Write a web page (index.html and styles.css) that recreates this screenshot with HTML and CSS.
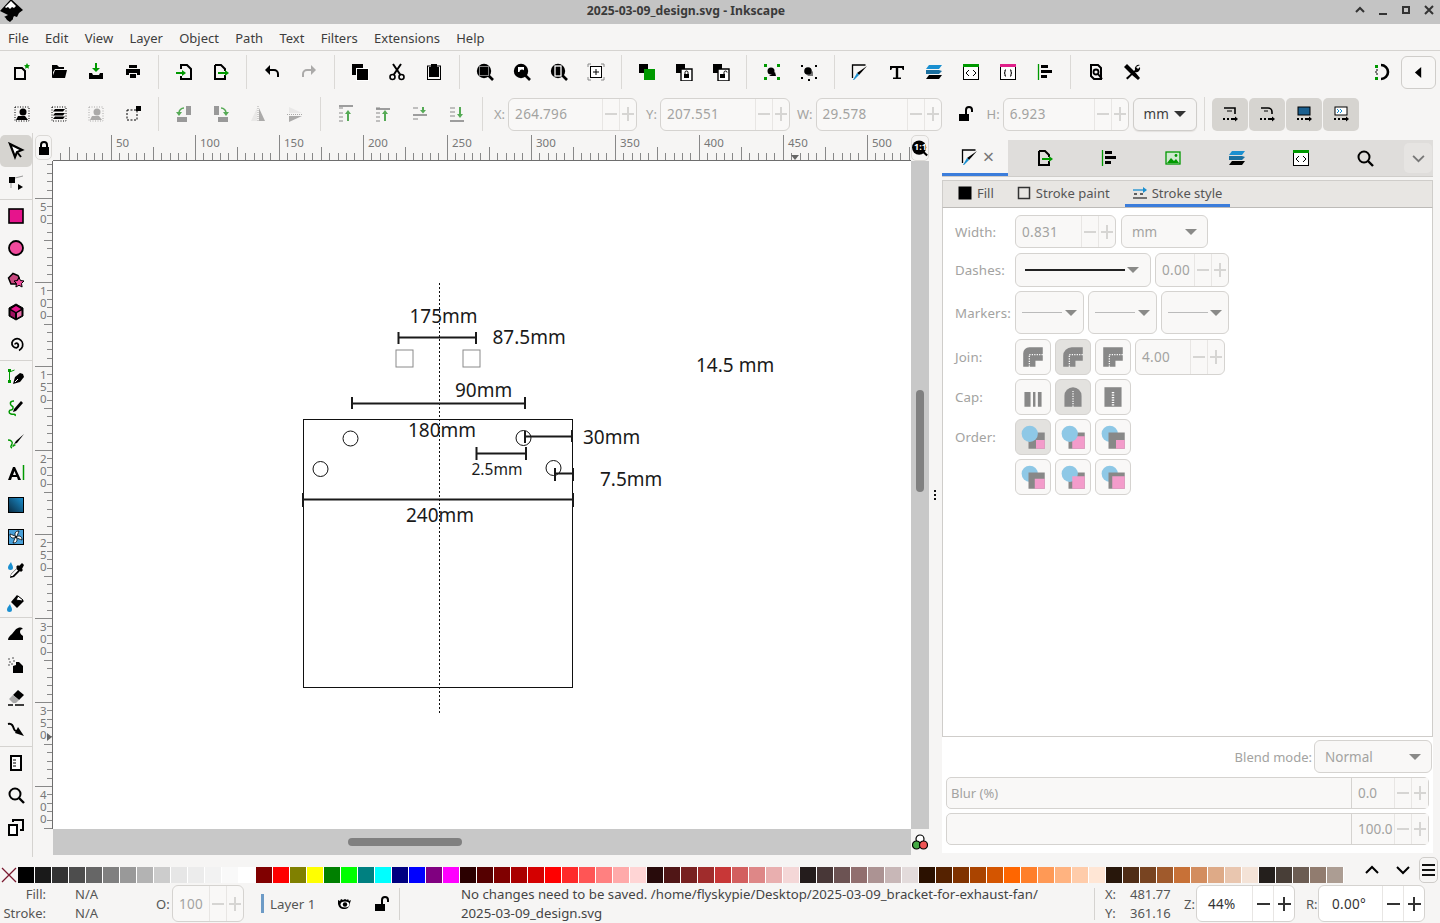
FILE: index.html
```html
<!DOCTYPE html>
<html>
<head>
    <meta charset="utf-8">
    <title>2025-03-09_design.svg - Inkscape</title>
    <link rel="stylesheet" href="styles.css">
</head>
<body>
    <svg class="defs">
        <symbol id="lens" viewBox="0 0 18 18"><circle cx="8" cy="8" r="7.2"/><path d="M12 12l5 5" stroke="#000" stroke-width="2.6"/></symbol>
        <symbol id="align" viewBox="0 0 18 18"><path d="M2.5 1v16" stroke="#090" stroke-width="1.3"/><path d="M5 2h7v3H5zM5 7h11v3H5zM5 12h6v3H5z"/></symbol>
        <symbol id="layers" viewBox="0 0 18 18"><path d="M4 2h13l-3 4H1z" fill="#1a8fd0"/><path d="M1 7h13l3 1-3 3H1z" fill="#1a6f9f"/><path d="M4 12h13l-3 4H1z"/></symbol>
        <symbol id="xml" viewBox="0 0 18 18"><rect x="1.5" y="1.5" width="15" height="15" fill="#fff" stroke="#000"/><path d="M1 1h16v3H1z" fill="#090"/><path d="M7 7l-3 3 3 3M11 7l3 3-3 3" fill="none" stroke="#000"/></symbol>
        <symbol id="exportdoc" viewBox="0 0 18 18"><path d="M3 2h6l4 4v2M13 12v4H3V2" fill="none" stroke="#000" stroke-width="2"/><path d="M6 10h8" stroke="#090" stroke-width="2"/><path d="M13 7l4 3-4 3z" fill="#090"/></symbol>
        <symbol id="brush" viewBox="0 0 18 18"><path d="M1.5 15V2h13" fill="none" stroke="#000" stroke-width="1.3"/><path d="M16 3L8 12l-2-2z"/><path d="M6 10l2 2-5 5H2z" fill="#1a8fd0"/></symbol>
        <symbol id="join" viewBox="0 0 18 18"><path d="M1 17V6a5 5 0 0 1 5-5h11v11h-6v5z" fill="#888"/><path d="M6 17V7h11" fill="none" stroke="#fff" stroke-dasharray="1 1"/></symbol>
        <symbol id="miter" viewBox="0 0 18 18"><path d="M1 17V1h16v11h-6v5z" fill="#888"/><path d="M6 17V7h11" fill="none" stroke="#fff" stroke-dasharray="1 1"/></symbol>
        <symbol id="dotbox" viewBox="0 0 18 18"><rect x="2" y="2" width="14" height="14" fill="none" stroke="#000" stroke-dasharray="1 1.5"/></symbol>
        <symbol id="arrowup" viewBox="0 0 18 18"><path d="M2 3h4M2 8h4M2 12h4M2 16h4" stroke="#888"/><path d="M11 16V8" stroke="#5a5" stroke-width="2"/><path d="M8 9l3-4 3 4z" fill="#5a5"/></symbol>
    </svg>

    <div class="titlebar">
        <svg class="logo" viewBox="0 0 24 24"><g transform="translate(0 3)"><path d="M11 -2L23 9l-4 3-2 4-3-1-2 4-3-2-5-1 4-2L0 10z"/><path d="M11 0l5 5-2 2-2-1-2 2-2-2-2 1-1-1z" fill="#fff"/><path d="M5 16h8v2l-3 3-3-2z"/></g></svg>
        <div class="title">2025-03-09_design.svg - Inkscape</div>
        <div class="winbtns">
            <svg viewBox="0 0 12 12"><path d="M2 8l4-4 4 4" fill="none" stroke="#333" stroke-width="2"/></svg>
            <svg viewBox="0 0 12 12"><path d="M2 10h8" stroke="#333" stroke-width="2"/></svg>
            <svg viewBox="0 0 12 12"><rect x="3" y="3" width="6" height="6" fill="none" stroke="#333" stroke-width="2"/></svg>
            <svg viewBox="0 0 12 12"><path d="M2 2l8 8M10 2l-8 8" stroke="#333" stroke-width="2"/></svg>
        </div>
    </div>

    <div class="menubar">
        <span>File</span><span>Edit</span><span>View</span><span>Layer</span><span>Object</span><span>Path</span><span>Text</span><span>Filters</span><span>Extensions</span><span>Help</span>
    </div>

    <!-- commands -->
    <div class="toolbar cmdbar">
        <div class="tb"><svg class="ic" viewBox="0 0 18 18"><path d="M2 5h7l3 3v8H2z" fill="none" stroke="#000" stroke-width="2"/><path d="M14 0l1 2 2 .3-1.5 1.5.4 2-1.9-1-1.9 1 .4-2L11 2.3 13 2z" fill="#090"/></svg></div>
        <div class="tb"><svg class="ic" viewBox="0 0 18 18"><path d="M2 2h5l2 2h5v2H5L3 9v5H2z"/><path d="M5 7h12l-2 8H2z"/></svg></div>
        <div class="tb"><svg class="ic" viewBox="0 0 18 18"><path d="M9 0v6" stroke="#090" stroke-width="2"/><path d="M5 5h8l-4 4z" fill="#090"/><path d="M2 10h3l1 2h6l1-2h3v6H2z"/></svg></div>
        <div class="tb"><svg class="ic" viewBox="0 0 18 18"><path d="M5 2h8v3H5zM2 6h14v6h-3v-2H5v2H2zM6 11h6v4H6z"/></svg></div>
        <div class="sep"></div>
        <div class="tb"><svg class="ic" viewBox="0 0 18 18"><path d="M6 6V2h6l4 4v10H6v-3" fill="none" stroke="#000" stroke-width="2"/><path d="M1 10h8" stroke="#090" stroke-width="2"/><path d="M7 7l4 3-4 3z" fill="#090"/></svg></div>
        <div class="tb"><svg class="ic"><use href="#exportdoc"/></svg></div>
        <div class="sep"></div>
        <div class="tb"><svg class="ic" viewBox="0 0 18 18"><path d="M3 7h8a4 4 0 0 1 4 4v3" fill="none" stroke="#000" stroke-width="2"/><path d="M7 2L2 7l5 5z"/></svg></div>
        <div class="tb"><svg class="ic off" viewBox="0 0 18 18"><path d="M15 7H7a4 4 0 0 0-4 4v3" fill="none" stroke="#000" stroke-width="2"/><path d="M11 2l5 5-5 5z"/></svg></div>
        <div class="sep"></div>
        <div class="tb"><svg class="ic" viewBox="0 0 18 18"><path d="M1 1h11v11H1z"/><path d="M5 5h13v13H5z" fill="#fff"/><path d="M6 6h11v11H6z"/></svg></div>
        <div class="tb"><svg class="ic" viewBox="0 0 18 18"><circle cx="4.5" cy="14" r="2.5" fill="none" stroke="#000" stroke-width="1.6"/><circle cx="13.5" cy="14" r="2.5" fill="none" stroke="#000" stroke-width="1.6"/><path d="M5.5 12L13 1M12.5 12L5 1" stroke="#000" stroke-width="2"/></svg></div>
        <div class="tb"><svg class="ic" viewBox="0 0 18 18"><rect x="2.5" y="3" width="13" height="13.5" fill="none" stroke="#000"/><path d="M6 1h6v3h2v10H4V4h2z"/></svg></div>
        <div class="sep"></div>
        <div class="tb"><svg class="ic" viewBox="0 0 18 18"><use href="#lens"/><rect x="3.5" y="3.5" width="9" height="9" fill="none" stroke="#fff" stroke-dasharray="1 1"/></svg></div>
        <div class="tb"><svg class="ic" viewBox="0 0 18 18"><use href="#lens"/><path d="M5 4h6v5H5z" fill="#fff"/><circle cx="9" cy="9" r="2.5" fill="#000"/></svg></div>
        <div class="tb"><svg class="ic" viewBox="0 0 18 18"><use href="#lens"/><rect x="5" y="3" width="6" height="10" fill="none" stroke="#fff" stroke-width="1.3"/></svg></div>
        <div class="tb"><svg class="ic" viewBox="0 0 18 18"><path d="M1 4V1h3M14 1h3v3M17 14v3h-3M4 17H1v-3" fill="none" stroke="#888"/><rect x="3.5" y="3.5" width="11" height="11" fill="#fff" stroke="#000"/><path d="M9 6v6M6 9h6" stroke="#000"/></svg></div>
        <div class="sep"></div>
        <div class="tb"><svg class="ic" viewBox="0 0 18 18"><path d="M1 1h9v9H1z"/><path d="M6 6h11v11H6z" fill="#090"/></svg></div>
        <div class="tb"><svg class="ic" viewBox="0 0 18 18"><path d="M1 1h9v9H1z"/><path d="M6 6h11v12H6z" fill="#fff"/><path d="M6 6h11v12H6z" fill="none" stroke="#000" stroke-width="1.4"/><path d="M9 11h5v4H9z"/><path d="M10 11V9.500a1.500 1.500 0 0 1 3 0V11" fill="none" stroke="#000"/></svg></div>
        <div class="tb"><svg class="ic" viewBox="0 0 18 18"><path d="M1 1h9v9H1z"/><path d="M6 6h11v12H6z" fill="#fff"/><path d="M6 6h11v12H6z" fill="none" stroke="#000" stroke-width="1.4"/><path d="M8 11h5v4H8z"/><path d="M12 11V9.500a1.500 1.500 0 0 1 3 0" fill="none" stroke="#000"/></svg></div>
        <div class="sep"></div>
        <div class="tb"><svg class="ic" viewBox="0 0 18 18"><path d="M1 1h3v3H1zM14 1h3v3h-3zM1 14h3v3H1zM14 14h3v3h-3z" fill="#090"/><circle cx="8" cy="8" r="3.500"/><path d="M13 13H6l6-4z"/></svg></div>
        <div class="tb"><svg class="ic" viewBox="0 0 18 18"><path d="M1 2h2v2H1zM15 2h2v2h-2zM1 14h2v2H1zM15 14h2v2h-2zM8 16h2v2H8z"/><path d="M13 13H7l6-5z" fill="#777"/><circle cx="8" cy="8" r="3.800"/></svg></div>
        <div class="sep"></div>
        <div class="tb"><svg class="ic"><use href="#brush"/></svg></div>
        <div class="tb"><svg class="ic" viewBox="0 0 18 18"><path d="M2 3h14v4h-1.200l-1-2H10.200v9.500H13V16H5v-1.500h2.800V5H4.200l-1 2H2z"/></svg></div>
        <div class="tb"><svg class="ic"><use href="#layers"/></svg></div>
        <div class="tb"><svg class="ic"><use href="#xml"/></svg></div>
        <div class="tb"><svg class="ic" viewBox="0 0 18 18"><rect x="1.500" y="1.500" width="15" height="15" fill="#fff" stroke="#000"/><path d="M1 1h16v3H1z" fill="#e0218a"/><path d="M7 7H6v2.500L5 10l1 .5V13h1M11 7h1v2.500l1 .5-1 .5V13h-1" fill="none" stroke="#000"/></svg></div>
        <div class="tb"><svg class="ic"><use href="#align"/></svg></div>
        <div class="sep"></div>
        <div class="tb"><svg class="ic" viewBox="0 0 18 18"><path d="M4 2h7l3 3v11H7l-3-3z" fill="none" stroke="#000" stroke-width="2"/><circle cx="9" cy="9" r="2.500" fill="none" stroke="#000" stroke-width="1.800"/><path d="M11 11l4 5" stroke="#000" stroke-width="2"/></svg></div>
        <div class="tb"><svg class="ic" viewBox="0 0 18 18"><path d="M3 1l5 5 3 3 5 6-2 2-6-5-3-3-5-5z"/><path d="M16 2a4 4 0 0 0-5 5L2 15l1.500 1.500L11 9a4 4 0 0 0 5-5l-2 2-2-2z"/></svg></div>
        <div class="cmdend">
            <svg class="ic" viewBox="0 0 18 18"><path d="M8 2a7 7 0 0 1 0 14" fill="none" stroke="#000" stroke-width="2.600"/><path d="M2 2h3v3H2zM2 14h3v3H2z" fill="#090"/><path d="M3 7h2M3 11h2M3 8v2" stroke="#000"/></svg>
            <div class="backbtn"><svg viewBox="0 0 10 14"><path d="M8 1v12L1 7z"/></svg></div>
        </div>
    </div>

    <!-- selector tool controls -->
    <div class="toolbar ctlbar">
        <div class="tb"><svg class="ic" viewBox="0 0 18 18"><use href="#dotbox"/><circle cx="10" cy="7" r="3.500"/><path d="M3 15l2-4h7l3 4z"/></svg></div>
        <div class="tb"><svg class="ic" viewBox="0 0 18 18"><use href="#dotbox"/><path d="M5 4h10l-2 2.500H3zM5 8h10l-2 2.500H3zM5 11.500h10l-2 2.500H3z"/></svg></div>
        <div class="tb"><svg class="ic off" viewBox="0 0 18 18"><use href="#dotbox"/><circle cx="10" cy="7" r="3.500"/><path d="M3 15l2-4h7l3 4z"/></svg></div>
        <div class="tb"><svg class="ic" viewBox="0 0 18 18"><path d="M3 5h10v10H3z" fill="none" stroke="#000" stroke-dasharray="2 1.500"/><path d="M12 1h5v5h-5z"/></svg></div>
        <div class="sep"></div>
        <div class="tb"><svg class="ic" viewBox="0 0 18 18"><path d="M11 1h5v9h-5zM2 12h10v5H2z" fill="#999"/><path d="M9 3a5 5 0 0 0-5 5" fill="none" stroke="#5a5" stroke-width="1.600"/><path d="M1 7h6l-3 4z" fill="#5a5"/></svg></div>
        <div class="tb"><svg class="ic" viewBox="0 0 18 18"><path d="M2 1h5v9H2zM6 12h10v5H6z" fill="#999"/><path d="M9 3a5 5 0 0 1 5 5" fill="none" stroke="#5a5" stroke-width="1.600"/><path d="M11 7h6l-3 4z" fill="#5a5"/></svg></div>
        <div class="tb"><svg class="ic off" viewBox="0 0 18 18"><path d="M8 3v13H2z" fill="#ccc"/><path d="M10 3v13h6z"/><path d="M9 1v16" stroke="#000" stroke-dasharray="1 1"/></svg></div>
        <div class="tb"><svg class="ic off" viewBox="0 0 18 18"><path d="M3 2l13 6H3z" fill="#ccc"/><path d="M3 11l13 0-13 6z"/><path d="M1 9.500h16" stroke="#000" stroke-dasharray="1 1"/></svg></div>
        <div class="sep"></div>
        <div class="tb"><svg class="ic" viewBox="0 0 18 18"><path d="M2 1h14" stroke="#888" stroke-width="1.600"/><use href="#arrowup"/></svg></div>
        <div class="tb"><svg class="ic" viewBox="0 0 18 18"><path d="M2 4h14" stroke="#888" stroke-width="1.600"/><use href="#arrowup"/></svg></div>
        <div class="tb"><svg class="ic" viewBox="0 0 18 18"><path d="M2 3h5M2 14h5" stroke="#888"/><path d="M2 10h14" stroke="#888" stroke-width="1.600"/><path d="M12 2v4" stroke="#5a5" stroke-width="2"/><path d="M9 5h6l-3 3.500z" fill="#5a5"/></svg></div>
        <div class="tb"><svg class="ic" viewBox="0 0 18 18"><path d="M2 3h5M2 7h5M2 11h5" stroke="#888"/><path d="M2 16h14" stroke="#888" stroke-width="1.600"/><path d="M12 2v8" stroke="#5a5" stroke-width="2"/><path d="M9 9h6l-3 4z" fill="#5a5"/></svg></div>
        <div class="sep"></div>
        <label class="lbl lbl-x">X:</label>
        <div class="spin w129"><span class="spin-val">264.796</span><i class="minus"></i><i class="plus"></i></div>
        <label class="lbl lbl-y">Y:</label>
        <div class="spin w130"><span class="spin-val">207.551</span><i class="minus"></i><i class="plus"></i></div>
        <label class="lbl lbl-w">W:</label>
        <div class="spin w126"><span class="spin-val">29.578</span><i class="minus"></i><i class="plus"></i></div>
        <svg class="ctl-lock" viewBox="0 0 16 16"><path d="M1 8h10v7H1z"/><path d="M8 8V4a3 3 0 0 1 6 0v2" fill="none" stroke="#000" stroke-width="2"/></svg>
        <label class="lbl lbl-h">H:</label>
        <div class="spin w126"><span class="spin-val">6.923</span><i class="minus"></i><i class="plus"></i></div>
        <div class="unit"><span>mm</span><b class="caret dark"></b></div>
        <div class="sep sep-unit"></div>
        <div class="toggle"><svg class="ic" viewBox="0 0 18 18"><path d="M3 3h11v6" fill="none" stroke="#000" stroke-width="1.600"/><path d="M6 6h5" stroke="#000"/><path d="M2 14h2M6 14h2M10 14h4" stroke="#000" stroke-width="2"/><path d="M14 11.500l3 2.500-3 2.500z"/></svg></div>
        <div class="toggle"><svg class="ic" viewBox="0 0 18 18"><path d="M3 3h7a4 4 0 0 1 4 4v2" fill="none" stroke="#000" stroke-width="1.600"/><path d="M6 6h4" stroke="#000"/><path d="M2 14h2M6 14h2M10 14h4" stroke="#000" stroke-width="2"/><path d="M14 11.500l3 2.500-3 2.500z"/></svg></div>
        <div class="toggle"><svg class="ic" viewBox="0 0 18 18"><rect x="3" y="2" width="12" height="8" fill="#1a5f8f" stroke="#000"/><path d="M2 14h2M6 14h2M10 14h4" stroke="#000" stroke-width="2"/><path d="M14 11.500l3 2.500-3 2.500z"/></svg></div>
        <div class="toggle"><svg class="ic" viewBox="0 0 18 18"><rect x="3" y="2" width="12" height="8" fill="#fff" stroke="#000"/><path d="M5 4l2 2-2 2M8 4l2 2-2 2" fill="none" stroke="#1a8fd0"/><path d="M2 14h2M6 14h2M10 14h4" stroke="#000" stroke-width="2"/><path d="M14 11.500l3 2.500-3 2.500z"/></svg></div>
    </div>

    <div class="main">
        <!-- tools -->
        <div class="toolbox">
            <div class="tool active"><svg class="ic" viewBox="0 0 18 18"><path d="M3 2l12 6-5 2-2 5z" fill="#fff" stroke="#000" stroke-width="2.200"/><path d="M10 10l4 5" stroke="#000" stroke-width="2"/></svg></div>
            <div class="tool"><svg class="ic" viewBox="0 0 18 18"><path d="M2 3h6v6H2z"/><path d="M4 14V9M8 4l8-2" stroke="#999"/><path d="M11 10l5 3-5 3z"/></svg></div>
            <div class="hr"></div>
            <div class="tool"><svg class="ic" viewBox="0 0 18 18"><rect x="2" y="2" width="14" height="14" fill="#e6148c" stroke="#000" stroke-width="1.600"/></svg></div>
            <div class="tool"><svg class="ic" viewBox="0 0 18 18"><circle cx="9" cy="9" r="7" fill="#f04a9c" stroke="#000" stroke-width="1.800"/></svg></div>
            <div class="tool"><svg class="ic" viewBox="0 0 18 18"><path d="M1.500 7l4.500-4.500 5 2 1 2L9 13H4z" fill="#c8487f" stroke="#000" stroke-width="1.500"/><path d="M12 6.500l1.500 3 3.500.5-2.500 2.500.6 3.500-3.100-1.700-3.100 1.700.6-3.500L7 10l3.500-.5z" fill="#f04a9c" stroke="#000"/></svg></div>
            <div class="tool"><svg class="ic" viewBox="0 0 18 18"><path d="M9 1l7 4v8l-7 4-7-4V5z" stroke="#000" fill="#000"/><path d="M9 3l5 3-5 3-5-3z" fill="#e6148c"/><path d="M3.500 7.500L8 10v5l-4.500-2.500z" fill="#a01060"/><path d="M14.500 7.500L10 10v5l4.500-2.500z" fill="#e86aa8"/></svg></div>
            <div class="tool"><svg class="ic" viewBox="0 0 18 18"><path d="M8 9.500a1.500 1.500 0 0 1 2.500-1 2.500 2.500 0 0 1-1 4.300A4.500 4.500 0 0 1 5 7.500a5.500 5.500 0 0 1 7-3.500 6.500 6.500 0 0 1 3.500 7.500A7 7 0 0 1 12 15.500" fill="none" stroke="#000" stroke-width="1.800"/></svg></div>
            <div class="hr"></div>
            <div class="tool"><svg class="ic" viewBox="0 0 18 18"><path d="M1 1h3v3H1zM1 12h3v3H1z" fill="#090"/><path d="M2.500 12V4l5-2" fill="none" stroke="#090"/><path d="M16 6l-3-1-5 4-2 7 7-2 4-5z"/><path d="M8 14l3-3" stroke="#fff"/></svg></div>
            <div class="tool"><svg class="ic" viewBox="0 0 18 18"><path d="M16 3l-2-2-7 8-1 3 3-1z"/><path d="M7 1C2 1 3 5 5 6s1 4-1 4-3 3 0 4 5-1 4 2" fill="none" stroke="#090" stroke-width="1.500"/></svg></div>
            <div class="tool"><svg class="ic" viewBox="0 0 18 18"><path d="M17 2l-8 7-2 3 3-1z"/><path d="M1 8c3 0 5 2 4 4s-2 3 0 4" fill="none" stroke="#090" stroke-width="1.400"/><path d="M7 12l-2 2 1 1 3-2z" fill="#090"/></svg></div>
            <div class="tool"><svg class="ic" viewBox="0 0 18 18"><path d="M6 3h2l6 13h-3l-1-3H5l-1 3H1zM6 11h3L7.500 7z" fill-rule="evenodd"/><path d="M16.500 1v15" stroke="#090" stroke-width="1.500"/></svg></div>
            <div class="tool"><svg class="ic" viewBox="0 0 18 18"><defs><linearGradient id="grad" x1="0" y1="1" x2="1" y2="0"><stop offset="0" stop-color="#0a2a40"/><stop offset="1" stop-color="#1a90d0"/></linearGradient></defs><rect x="1.500" y="1.500" width="15" height="15" fill="url(#grad)" stroke="#000"/></svg></div>
            <div class="tool"><svg class="ic" viewBox="0 0 18 18"><rect x="1.500" y="1.500" width="15" height="15" fill="#4aa0d8" stroke="#000"/><path d="M9 9C7 6 8 3 12 3c-1 2-1 4-3 6zM9 9c3-2 6-1 6 3-2-1-4-1-6-3zM9 9c2 3 1 6-3 6 1-2 1-4 3-6zM9 9c-3 2-6 1-6-3 2 1 4 1 6 3z" fill="#fff" stroke="#000" stroke-width=".8"/></svg></div>
            <div class="tool shift"><svg class="ic" viewBox="0 0 18 18"><path d="M17 3l-2-2-3 3-1-1-2 2 1 1-6 6-1 4 4-1 6-6 1 1 2-2-1-1z"/><path d="M9.500 7L4 12.500v1.500h1.500L11 8.500z" fill="#fff"/><path d="M4 0C2 3 1 4 1 5.500a2.500 2.500 0 0 0 5 0C6 4 5 3 4 0z" fill="#1a8fd0"/></svg></div>
            <div class="tool shift"><svg class="ic" viewBox="0 0 18 18"><path d="M10 1l7 6-7 7-6-6z"/><path d="M11 2l5 4-1 1-6-1z" fill="#fff" stroke="#000"/><path d="M3 10c-2 3-3 4-3 5.500a2.500 2.500 0 0 0 5 0C5 14 4 13 3 10z" fill="#1a8fd0"/></svg></div>
            <div class="hr"></div>
            <div class="tool"><svg class="ic" viewBox="0 0 18 18"><path d="M1 15c0-3 2-4 4-6s3-5 6-6c3-1 4 0 5 1-2 0-3 1-3 3 0 2 2 3 3 4v4z"/></svg></div>
            <div class="tool"><svg class="ic" viewBox="0 0 18 18"><path d="M6 16V9l3-1V5h3l4 4v7z"/><path d="M1 2h2M5 1h2M2 5h2M6 4h2M1 8h2M4 7h2" stroke="#888" stroke-width="1.400"/></svg></div>
            <div class="tool"><svg class="ic" viewBox="0 0 18 18"><path d="M11 1l6 5-5 5-6-5z"/><path d="M6 6l6 5-3 3H6L2 10z" fill="#aaa"/><path d="M1 16h5M8 16h9" stroke="#000" stroke-width="1.500"/></svg></div>
            <div class="tool"><svg class="ic" viewBox="0 0 18 18"><path d="M1 3c4-1 5 2 6 5s3 2 5 1" fill="none" stroke="#000" stroke-width="2"/><path d="M11 6l6 9-9-3z"/></svg></div>
            <div class="hr"></div>
            <div class="tool"><svg class="ic" viewBox="0 0 18 18"><path d="M4 2h10v14H4z" fill="#fff" stroke="#000" stroke-width="2"/><path d="M6 6h3M6 9h3M6 12h3" stroke="#000" stroke-width="1.200"/></svg></div>
            <div class="tool"><svg class="ic" viewBox="0 0 18 18"><circle cx="8" cy="8" r="5.500" fill="none" stroke="#000" stroke-width="2"/><path d="M12 12l5 5" stroke="#000" stroke-width="2.400"/></svg></div>
            <div class="tool"><svg class="ic" viewBox="0 0 18 18"><path d="M2 7h8v10H2z" fill="#fff" stroke="#000" stroke-width="2"/><path d="M6 4V2h10v10h-3" fill="none" stroke="#000" stroke-width="2"/></svg></div>
        </div>

        <!-- canvas with rulers and scrollbars -->
        <div class="workspace">
            <div class="corner"><svg viewBox="0 0 12 16"><path d="M1 7h10v8H1z"/><path d="M3 7V5a3 3 0 0 1 6 0v2" fill="none" stroke="#000" stroke-width="2"/></svg></div>
            <div class="ruler-top">
                <span>50</span><span>100</span><span>150</span><span>200</span><span>250</span><span>300</span><span>350</span><span>400</span><span>450</span><span>500</span>
                <b class="mark-top"></b>
            </div>
            <div class="zoom11"><svg viewBox="0 0 18 18"><circle cx="8" cy="8" r="8"/><path d="M12 12l5 5" stroke="#000" stroke-width="2.400"/></svg><span>1:1</span></div>
            <div class="ruler-left">
                <span>50</span><span>100</span><span>150</span><span>200</span><span>250</span><span>300</span><span>350</span><span>400</span>
                <b class="mark-left"></b>
            </div>
            <div class="canvas">
                <svg class="drawing" viewBox="53 161 858 668">
                    <rect class="thin" x="303.500" y="419.500" width="269" height="268"/>
                    <path class="guide" d="M439.500 283V713"/>
                    <rect class="square" x="396" y="350" width="17" height="17"/>
                    <rect class="square" x="463" y="350" width="17" height="17"/>
                    <circle class="thin" cx="350.500" cy="438.500" r="7.500"/>
                    <circle class="thin" cx="320.500" cy="469" r="7.500"/>
                    <circle class="thin" cx="523.500" cy="438" r="7.500"/>
                    <circle class="thin" cx="553.500" cy="468" r="7.500"/>
                    <path class="dim" d="M398.500 332V344M398.500 337.500H476M476 332V344"/>
                    <path class="dim" d="M352 397V409M352 403.500H525M525 397V409"/>
                    <path class="dim" d="M525 431V443M525 436.500H572M572 430V442"/>
                    <path class="dim" d="M476.500 447V460M476.500 453.500H526M526 447V460"/>
                    <path class="dim" d="M555 468V481M555 473.500H573M573 468V481"/>
                    <path class="dim" d="M303 493V507M303 499.500H573M573 493V507"/>
                    <text x="409.500" y="323">175mm</text>
                    <text x="492.500" y="344">87.5mm</text>
                    <text x="455" y="397">90mm</text>
                    <text x="408" y="437">180mm</text>
                    <text x="583" y="444">30mm</text>
                    <text class="small" x="471.500" y="475">2.5mm</text>
                    <text x="600" y="486">7.5mm</text>
                    <text x="406" y="522">240mm</text>
                    <text x="696" y="372">14.5 mm</text>
                </svg>
            </div>
            <div class="vscroll"><b></b></div>
            <div class="hscroll"><b></b></div>
            <div class="cms"><svg viewBox="0 0 16 16"><circle cx="8" cy="5" r="4" fill="#fff" stroke="#000" stroke-width="1.200"/><circle cx="4.500" cy="11" r="4" fill="#4a4" stroke="#000" stroke-width="1.200"/><circle cx="11.500" cy="11" r="4" fill="#e55" stroke="#000" stroke-width="1.200"/></svg></div>
        </div>

        <div class="handle"><i></i><i></i><i></i></div>

        <!-- fill and stroke dialog -->
        <div class="panel">
            <div class="tabs">
                <div class="tab first"><svg class="ic" viewBox="0 0 18 18"><use href="#brush"/></svg><em>×</em></div>
                <div class="tab"><svg class="ic"><use href="#exportdoc"/></svg></div>
                <div class="tab"><svg class="ic"><use href="#align"/></svg></div>
                <div class="tab"><svg class="ic" viewBox="0 0 18 18"><rect x="2" y="3" width="14" height="12" fill="#cfe8cf" stroke="#090" stroke-width="1.300"/><path d="M3 14l4-5 3 3 2-2 3 4z" fill="#090"/><circle cx="12" cy="6.500" r="1.400" fill="#090"/></svg></div>
                <div class="tab"><svg class="ic"><use href="#layers"/></svg></div>
                <div class="tab"><svg class="ic"><use href="#xml"/></svg></div>
                <div class="tab"><svg class="ic" viewBox="0 0 18 18"><circle cx="8" cy="8" r="5.500" fill="none" stroke="#000" stroke-width="2"/><path d="M12 12l5 5" stroke="#000" stroke-width="2.400"/></svg></div>
                <div class="tabmore"><svg viewBox="0 0 14 10"><path d="M1 2l6 6 6-6" fill="none" stroke="#777" stroke-width="2"/></svg></div>
            </div>
            <div class="subtabs">
                <div class="subtab s-fill"><svg viewBox="0 0 14 14"><rect width="13" height="13" x="0.500" y="0.500"/></svg>Fill</div>
                <div class="subtab"><svg viewBox="0 0 14 14"><rect width="11" height="11" x="1.500" y="1.500" fill="none" stroke="#333" stroke-width="1.500"/></svg>Stroke paint</div>
                <div class="subtab current"><svg viewBox="0 0 14 14"><path d="M0 4h11" stroke="#1a8fd0" stroke-width="1.300"/><path d="M10 1l4 3-4 3z" fill="#1a8fd0"/><path d="M1 8h3M7 8h3" stroke="#333" stroke-width="1.300"/><path d="M0 12h14" stroke="#333" stroke-width="1.300"/></svg>Stroke style</div>
            </div>
            <div class="body">
                <div class="row r-width">
                    <label>Width:</label>
                    <div class="spin w101"><span class="spin-val">0.831</span><i class="minus"></i><i class="plus"></i></div>
                    <div class="select w87"><span>mm</span><b class="caret"></b></div>
                </div>
                <div class="row r-dash">
                    <label>Dashes:</label>
                    <div class="select w136"><u class="dash"></u><b class="caret"></b></div>
                    <div class="spin w74"><span class="spin-val">0.00</span><i class="minus"></i><i class="plus"></i></div>
                </div>
                <div class="row r-mark">
                    <label>Markers:</label>
                    <div class="select w69"><u class="mark"></u><b class="caret"></b></div>
                    <div class="select w69"><u class="mark"></u><b class="caret"></b></div>
                    <div class="select w68"><u class="mark"></u><b class="caret"></b></div>
                </div>
                <div class="row r-btn">
                    <label>Join:</label>
                    <div class="opt"><svg viewBox="0 0 18 18"><use href="#join"/></svg></div>
                    <div class="opt on"><svg viewBox="0 0 18 18"><path d="M1 17V8a7 7 0 0 1 7-7h9v11h-6v5z" fill="#888"/><path d="M6 17V7h11" fill="none" stroke="#fff" stroke-dasharray="1 1"/></svg></div>
                    <div class="opt"><svg viewBox="0 0 18 18"><use href="#miter"/></svg></div>
                    <div class="spin w90"><span class="spin-val">4.00</span><i class="minus"></i><i class="plus"></i></div>
                </div>
                <div class="row r-btn">
                    <label>Cap:</label>
                    <div class="opt"><svg viewBox="0 0 18 18"><path d="M2 5h5v12H2zM9 5h2v12H9zM13 5h3v12h-3z" fill="#888"/></svg></div>
                    <div class="opt on"><svg viewBox="0 0 18 18"><path d="M2 17V8a7 7 0 0 1 14 0v9z" fill="#888"/><path d="M9 4v13" stroke="#fff" stroke-dasharray="1 1"/></svg></div>
                    <div class="opt"><svg viewBox="0 0 18 18"><path d="M2 1h14v16H2z" fill="#888"/><path d="M9 5v12" stroke="#fff" stroke-width="2" stroke-dasharray="1 1"/></svg></div>
                </div>
                <div class="row r-btn r-order">
                    <label>Order:</label>
                    <div class="opt on"><svg viewBox="0 0 20 20"><path d="M6 6h13v13H6z" fill="#888"/><path d="M12 12h7v7h-7z" fill="#f39ccb"/><circle cx="7" cy="7" r="6.500" fill="#8ec8e6"/></svg></div>
                    <div class="opt"><svg viewBox="0 0 20 20"><path d="M6 6h13v13H6z" fill="#888"/><path d="M9 9h10v10H9z" fill="#f39ccb"/><circle cx="7" cy="7" r="6.500" fill="#8ec8e6"/></svg></div>
                    <div class="opt"><svg viewBox="0 0 20 20"><circle cx="7" cy="7" r="6.500" fill="#8ec8e6"/><path d="M6 6h13v13H6z" fill="#888"/><path d="M12 12h7v7h-7z" fill="#f39ccb"/></svg></div>
                </div>
                <div class="row r-btn r-order">
                    <label></label>
                    <div class="opt"><svg viewBox="0 0 20 20"><circle cx="7" cy="7" r="6.500" fill="#8ec8e6"/><path d="M6 6h13v13H6z" fill="#888"/><path d="M11 11h8v8h-8z" fill="#f39ccb"/></svg></div>
                    <div class="opt"><svg viewBox="0 0 20 20"><path d="M6 6h13v13H6z" fill="#888"/><circle cx="7" cy="7" r="6.500" fill="#8ec8e6"/><path d="M9 9h10v10H9z" fill="#f39ccb"/></svg></div>
                    <div class="opt"><svg viewBox="0 0 20 20"><circle cx="7" cy="7" r="6.500" fill="#8ec8e6"/><path d="M6 6h13v13H6z" fill="#888"/><path d="M9 9h10v10H9z" fill="#f39ccb"/></svg></div>
                </div>
            </div>
            <div class="extras">
                <div class="blend">
                    <label>Blend mode:</label>
                    <div class="select w118"><span>Normal</span><b class="caret"></b></div>
                </div>
                <div class="slider">
                    <span class="slider-name">Blur (%)</span>
                    <div class="spin slider-spin"><span class="spin-val">0.0</span><i class="minus"></i><i class="plus"></i></div>
                </div>
                <div class="slider">
                    <span class="slider-name"></span>
                    <div class="spin slider-spin"><span class="spin-val">100.0</span><i class="minus"></i><i class="plus"></i></div>
                </div>
            </div>
        </div>
    </div>

    <div class="palettebar">
        <svg class="none" viewBox="0 0 16 16"><path d="M1 1l14 14M15 1L1 15" stroke="#7a1a30" stroke-width="1.300"/></svg>
        <div class="swatches" id="swatches"></div>
        <div class="palette-end">
            <svg viewBox="0 0 14 10"><path d="M1 8l6-6 6 6" fill="none" stroke="#000" stroke-width="2"/></svg>
            <svg viewBox="0 0 14 10"><path d="M1 2l6 6 6-6" fill="none" stroke="#000" stroke-width="2"/></svg>
            <div class="burger"><i></i><i></i><i></i></div>
        </div>
    </div>

    <div class="statusbar">
        <div class="style-info">
            <div><span>Fill:</span><span>N/A</span></div>
            <div><span>Stroke:</span><span>N/A</span></div>
        </div>
        <label class="st-o">O:</label>
        <div class="spin st-opacity"><span class="spin-val">100</span><i class="minus"></i><i class="plus"></i></div>
        <div class="layerbar"></div>
        <span class="layername">Layer 1</span>
        <svg class="st-ic eye" viewBox="0 0 16 16"><path d="M1 4l2 1 1-2 2 1 2-1 2 1 1-1 1 2 2-1-1 3v1c-1 4-3 5-6 5s-5-1-6-5z"/><ellipse cx="8" cy="8.500" rx="4.500" ry="3" fill="#fff"/><circle cx="8" cy="8.500" r="2.200"/></svg>
        <svg class="st-ic padlock" viewBox="0 0 16 16"><path d="M1 8h10v7H1z"/><path d="M8 8V4a3 3 0 0 1 6 0v2" fill="none" stroke="#000" stroke-width="2"/></svg>
        <div class="vline"></div>
        <div class="message">No changes need to be saved. /home/flyskypie/Desktop/2025-03-09_bracket-for-exhaust-fan/<br>2025-03-09_design.svg</div>
        <div class="vline"></div>
        <div class="coords">
            <div><span>X:</span><span>481.77</span></div>
            <div><span>Y:</span><span>361.16</span></div>
        </div>
        <label class="st-z">Z:</label>
        <div class="spin live st-zoom"><span class="spin-val">44%</span><i class="minus"></i><i class="plus"></i></div>
        <label class="st-r">R:</label>
        <div class="spin live st-rot"><span class="spin-val">0.00°</span><i class="minus"></i><i class="plus"></i></div>
    </div>

    <script src="script.js"></script>
</body>
</html>
```

FILE: styles.css
```css
* {
    box-sizing: border-box;
}
html, body {
    margin: 0;
    height: 923px;
    overflow: hidden;
}
body {
    display: flex;
    flex-direction: column;
    width: 1440px;
    background-color: #f6f5f4;
    color: #3d3d3d;
    font-family: "Noto Sans", sans-serif;
    font-size: 13px;
}
i, b, em, u {
    font-style: normal;
    text-decoration: none;
}
.defs {
    position: absolute;
    width: 0;
    height: 0;
}
.ic {
    width: 18px;
    height: 18px;
    flex: none;
}
.off {
    opacity: 0.3;
}

/* title and menu */
.titlebar {
    display: flex;
    align-items: center;
    height: 24px;
    flex: none;
    padding-bottom: 4px;
    background-color: #c4c4c4;
    overflow: hidden;
}
.logo {
    width: 24px;
    height: 24px;
    flex: none;
}
.title {
    flex: 1;
    padding-right: 6px;
    text-align: center;
    font-weight: 700;
    font-size: 12.2px;
    color: #3a3a3a;
}
.winbtns {
    display: flex;
    gap: 11px;
    padding-right: 5px;
}
.winbtns svg {
    width: 12px;
    height: 12px;
}
.menubar {
    display: flex;
    align-items: center;
    gap: 16.3px;
    height: 27px;
    flex: none;
    padding: 1px 0 0 8px;
    border-bottom: 1px solid #d5d3d0;
    font-size: 13px;
}

/* toolbars */
.toolbar {
    display: flex;
    align-items: center;
    flex: none;
    padding-left: 3px;
}
.cmdbar {
    height: 44px;
    padding-bottom: 2px;
}
.ctlbar {
    height: 38px;
}
.tb {
    display: flex;
    justify-content: center;
    width: 37px;
    flex: none;
}
.sep {
    width: 1px;
    height: 34px;
    margin: 0 6.5px;
    flex: none;
    background-color: #dbd9d6;
}
.cmdend {
    display: flex;
    align-items: center;
    margin-left: auto;
    padding-right: 4px;
    gap: 10px;
}
.backbtn {
    display: flex;
    align-items: center;
    justify-content: center;
    width: 35px;
    height: 33px;
    border: 1px solid #cfcdca;
    border-radius: 6px;
    background-color: #f8f7f6;
}
.backbtn svg {
    width: 9px;
    height: 13px;
}
.lbl {
    color: #a3a3a1;
}
.lbl-x {
    margin: 0 3px 0 5px;
}
.lbl-y {
    margin: 0 3px 0 9px;
}
.lbl-w {
    margin: 0 3px 0 7px;
}
.lbl-h {
    margin: 0 3px 0 0;
}
.ctl-lock {
    width: 16px;
    height: 16px;
    margin: 0 13px 0 16px;
    flex: none;
}

/* spin buttons */
.spin {
    display: flex;
    height: 33px;
    flex: none;
    border: 1px solid #d5d3d0;
    border-radius: 6px;
    background-color: #f9f8f7;
    color: #a3a3a1;
    font-size: 13.5px;
    overflow: hidden;
}
.spin-val {
    flex: 1;
    align-self: center;
    padding-left: 6px;
    letter-spacing: 0.3px;
    white-space: nowrap;
}
.spin i {
    position: relative;
    width: 17px;
    flex: none;
    border-left: 1px solid #e8e6e4;
}
.spin i::before {
    content: "";
    position: absolute;
    left: 2px;
    right: 2px;
    top: calc(50% - 1px);
    height: 2px;
    background-color: #d6d5d3;
}
.spin .plus::after {
    content: "";
    position: absolute;
    top: calc(50% - 7px);
    left: 7px;
    width: 2px;
    height: 14px;
    background-color: #d6d5d3;
}
.w129 { width: 129px; }
.w130 { width: 130px; }
.w126 { width: 126px; }
.w101 { width: 101px; }
.w74 { width: 74px; }
.w90 { width: 90px; }
.w87 { width: 87px; }
.w136 { width: 136px; }
.w69 { width: 69px; }
.w68 { width: 68px; }
.w118 { width: 118px; }

.unit {
    display: flex;
    align-items: center;
    justify-content: center;
    gap: 5px;
    width: 64px;
    height: 33px;
    margin-left: 4px;
    border: 1px solid #cfcdca;
    border-radius: 6px;
    background-color: #f6f5f4;
    box-shadow: 0 1px 1px #e4e2df;
    font-size: 13.5px;
}
.caret {
    width: 0;
    height: 0;
    flex: none;
    border-left: 6px solid transparent;
    border-right: 6px solid transparent;
    border-top: 6px solid #8a8a88;
}
.caret.dark {
    border-top-color: #333;
}
.sep-unit {
    margin: 0 7px;
}
.toggle {
    display: flex;
    align-items: center;
    justify-content: center;
    width: 36px;
    height: 33px;
    margin-right: 1px;
    flex: none;
    border-radius: 5px;
    background-color: #d6d4d0;
}

/* main area */
.main {
    display: flex;
    height: 724px;
    flex: none;
}
.toolbox {
    width: 33px;
    flex: none;
    padding-top: 2px;
    border-right: 1px solid #d5d3d0;
}
.tool {
    display: flex;
    align-items: center;
    justify-content: center;
    height: 32px;
}
.tool.shift {
    padding-top: 3px;
}
.tool.active {
    background-color: #d6d4d0;
    border-radius: 5px;
}
.hr {
    height: 1px;
    background-color: #d5d3d0;
}
.workspace {
    display: grid;
    grid-template-columns: 20px 858px 18px;
    grid-template-rows: 28px 668px 26px;
    width: 896px;
    flex: none;
}
.corner {
    display: flex;
    align-items: center;
    justify-content: center;
    margin: 2px 1px 1px 2px;
    border: 1px solid #dbd9d6;
    border-radius: 5px;
}
.corner svg {
    width: 12px;
    height: 16px;
}
.ruler-top {
    position: relative;
    display: flex;
    padding-left: 63px;
    border-bottom: 1px solid #6e6e6e;
    overflow: hidden;
    color: #777;
    font-size: 11.5px;
    background-image:
        repeating-linear-gradient(90deg, transparent 0 58px, #888 58px 59px, transparent 59px 84px),
        repeating-linear-gradient(90deg, transparent 0 16px, #888 16px 17px, transparent 17px 42px),
        repeating-linear-gradient(90deg, transparent 0 7.4px, #888 7.4px 8.4px);
    background-repeat: no-repeat;
    background-position: bottom;
    background-size: 100% 25px, 100% 13px, 100% 7px;
}
.ruler-top span {
    width: 84px;
    flex: none;
    padding-top: 2px;
}
.mark-top {
    position: absolute;
    left: 738px;
    bottom: 0;
    border-left: 4px solid transparent;
    border-right: 4px solid transparent;
    border-top: 5px solid #666;
}
.zoom11 {
    position: relative;
    display: flex;
    align-items: center;
    justify-content: center;
    margin-top: 2px;
    border: 1px solid #dbd9d6;
    border-radius: 5px;
}
.zoom11 svg {
    width: 17px;
    height: 17px;
}
.zoom11 span {
    position: absolute;
    left: 2px;
    top: 4px;
    color: #fff;
    font-size: 9px;
    font-weight: 700;
}
.ruler-left {
    position: relative;
    padding-top: 40px;
    border-right: 1px solid #6e6e6e;
    overflow: hidden;
    color: #777;
    font-size: 11.5px;
    background-image:
        repeating-linear-gradient(180deg, transparent 0 37px, #888 37px 38px, transparent 38px 84px),
        repeating-linear-gradient(180deg, transparent 0 37px, #888 37px 38px, transparent 38px 42px),
        repeating-linear-gradient(180deg, transparent 0 3.4px, #888 3.4px 4.4px, transparent 4.4px 8.4px);
    background-repeat: no-repeat;
    background-position: right;
    background-size: 17px 100%, 8px 100%, 5px 100%;
}
.ruler-left span {
    display: block;
    width: 8px;
    height: 84px;
    margin-left: 7px;
    line-height: 12px;
    word-break: break-all;
}
.mark-left {
    position: absolute;
    right: 0;
    top: 572px;
    border-top: 4px solid transparent;
    border-bottom: 4px solid transparent;
    border-left: 5px solid #666;
}
.canvas {
    background-color: #fff;
}
.drawing {
    display: block;
    width: 858px;
    height: 668px;
}
.drawing text {
    font-family: "Noto Sans", sans-serif;
    font-size: 19px;
    fill: #1a1a1a;
}
.drawing text.small {
    font-size: 15.5px;
}
.thin {
    fill: none;
    stroke: #111;
    stroke-width: 1;
}
.square {
    fill: #fff;
    stroke: #8a8a8a;
    stroke-width: 1;
}
.guide {
    stroke: #111;
    stroke-width: 1;
    stroke-dasharray: 2 2;
}
.dim {
    fill: none;
    stroke: #1a1a1a;
    stroke-width: 2;
}
.vscroll {
    position: relative;
    background-color: #c8c8c8;
}
.vscroll b {
    position: absolute;
    left: 5px;
    top: 229px;
    width: 8px;
    height: 102px;
    border-radius: 4px;
    background-color: #808080;
}
.hscroll {
    grid-column: 2;
    position: relative;
    background-color: #c8c8c8;
}
.hscroll b {
    position: absolute;
    left: 295px;
    top: 9px;
    width: 114px;
    height: 8px;
    border-radius: 4px;
    background-color: #808080;
}
.cms {
    display: flex;
    align-items: center;
    justify-content: center;
    border-radius: 5px;
}
.cms svg {
    width: 16px;
    height: 16px;
}
.handle {
    display: flex;
    flex-direction: column;
    align-items: center;
    justify-content: center;
    gap: 2px;
    width: 12px;
    flex: none;
}
.handle i {
    width: 2px;
    height: 2px;
    background-color: #111;
}

/* dialog */
.panel {
    display: flex;
    flex-direction: column;
    width: 493px;
    flex: none;
    margin-left: -1px;
    padding: 7px 0 4px;
}
.tabs {
    display: flex;
    align-items: center;
    height: 37px;
    flex: none;
    margin-left: 2px;
    background-color: #dfdddb;
    border-bottom: 1px solid #cfcdca;
}
.tab {
    display: flex;
    align-items: center;
    justify-content: center;
    width: 64px;
    flex: none;
    height: 100%;
}
.tab.first {
    width: 66px;
    margin-right: 5px;
    padding-left: 5px;
    gap: 4px;
    background-color: #f6f5f4;
    border-bottom: 3px solid #3b7ddb;
}
.tab.first em {
    color: #777;
    font-size: 20px;
}
.tabmore {
    display: flex;
    align-items: center;
    justify-content: center;
    width: 28px;
    height: 30px;
    margin-left: 7px;
    border-radius: 5px;
    background-color: #e6e4e2;
}
.tabmore svg {
    width: 13px;
    height: 9px;
}
.subtabs {
    display: flex;
    height: 28px;
    flex: none;
    margin: 3px 0 0 2px;
    padding-left: 7px;
    background-color: #e8e6e3;
    border: 1px solid #cfcdca;
    border-bottom: 1px solid #bdbbb8;
}
.subtab {
    display: flex;
    align-items: center;
    gap: 5px;
    padding: 0 8px;
    border-bottom: 3px solid transparent;
    font-size: 13px;
    color: #555;
}
.s-fill {
    padding-right: 15px;
}
.subtab svg {
    width: 14px;
    height: 14px;
}
.subtab.current {
    margin-left: 7px;
    padding: 0 8px;
    border-bottom-color: #3b7ddb;
}
.body {
    height: 529px;
    flex: none;
    margin-left: 2px;
    padding: 7px 0 0 12px;
    background-color: #fff;
    border: 1px solid #cfcdca;
    border-top: none;
}
.row {
    display: flex;
    align-items: center;
    gap: 4px;
    margin-bottom: 4px;
}
.row label {
    width: 56px;
    flex: none;
    color: #a3a3a1;
    font-size: 13.3px;
    letter-spacing: 0.1px;
    white-space: nowrap;
}
.select {
    display: flex;
    align-items: center;
    justify-content: space-between;
    height: 33px;
    flex: none;
    padding: 0 10px;
    border: 1px solid #d5d3d0;
    border-radius: 6px;
    background-color: #f9f8f7;
    color: #a3a3a1;
    font-size: 13.5px;
}
.r-width,
.r-mark {
    margin-bottom: 5px;
}
.r-width .select {
    margin-left: 1px;
}
.r-dash .select,
.r-dash .spin {
    height: 34px;
}
.r-dash .select {
    padding: 0 11px 0 9px;
}
.r-mark .select {
    height: 43px;
    padding: 0 6px;
}
.dash {
    width: 100px;
    height: 2px;
    background-color: #222;
}
.mark {
    width: 40px;
    height: 1px;
    background-color: #bbb;
}
.r-btn .spin {
    height: 36px;
}
.opt {
    display: flex;
    align-items: center;
    justify-content: center;
    width: 36px;
    height: 36px;
    flex: none;
    border: 1px solid #d5d3d0;
    border-radius: 6px;
    background-color: #f9f8f7;
}
.opt.on {
    background-color: #e3e2df;
}
.opt svg {
    width: 22px;
    height: 22px;
}
.r-order .opt svg {
    width: 25px;
    height: 25px;
}
.extras {
    flex: 1;
    margin-left: 2px;
    padding: 3px 1px 0 4px;
    background-color: #fff;
}
.blend {
    display: flex;
    align-items: center;
    justify-content: flex-end;
    gap: 2px;
    height: 33px;
}
.blend label {
    color: #a3a3a1;
}
.slider {
    display: flex;
    align-items: center;
    width: 483px;
    height: 32px;
    margin-top: 4px;
    border: 1px solid #d5d3d0;
    border-radius: 5px;
    background-color: #f9f8f7;
    color: #a3a3a1;
}
.slider-name {
    flex: 1;
    padding-left: 4px;
}
.slider-spin {
    width: 77px;
    height: 30px;
    border: none;
    border-left: 1px solid #d5d3d0;
    border-radius: 0;
}
.slider-spin .spin-val {
    letter-spacing: 0;
}

/* palette */
.palettebar {
    display: flex;
    align-items: flex-end;
    height: 27px;
    flex: none;
    padding-bottom: 1px;
}
.none {
    width: 16px;
    height: 16px;
    margin-left: 1px;
    flex: none;
}
.swatches {
    display: flex;
    height: 16px;
    margin-left: 1px;
}
.swatches i {
    width: 17px;
    height: 16px;
    flex: none;
    border-right: 1px solid #fff;
}
.palette-end {
    display: flex;
    align-items: center;
    margin-left: auto;
    gap: 17px;
    padding-right: 2px;
}
.palette-end svg {
    width: 14px;
    height: 10px;
}
.burger {
    display: flex;
    flex-direction: column;
    justify-content: center;
    gap: 3px;
    width: 19px;
    height: 26px;
    margin-left: -8px;
    padding: 0 2px;
    border: 1px solid #cfcdca;
    border-radius: 5px;
}
.burger i {
    height: 2px;
    background-color: #111;
}

/* status bar */
.statusbar {
    display: flex;
    align-items: center;
    height: 39px;
    flex: none;
    color: #555;
    font-size: 13px;
}
.style-info {
    width: 156px;
    flex: none;
    line-height: 19px;
}
.style-info span:first-child {
    display: inline-block;
    width: 46px;
    margin-right: 29px;
    text-align: right;
}
.st-o {
    width: 16px;
    flex: none;
}
.st-opacity {
    width: 72px;
    height: 37px;
}
.layerbar {
    width: 3px;
    height: 19px;
    margin: 0 6px 0 17px;
    flex: none;
    background-color: #6d9bc6;
}
.layername {
    width: 67px;
    flex: none;
    font-size: 13.3px;
}
.st-ic {
    width: 16px;
    height: 16px;
    flex: none;
}
.padlock {
    margin-left: 21px;
}
.vline {
    width: 1px;
    height: 32px;
    flex: none;
    margin-left: 9px;
    background-color: #d5d3d0;
}
.message {
    width: 624px;
    flex: none;
    margin-left: 61px;
    line-height: 19px;
    font-size: 13.23px;
    color: #444;
    white-space: nowrap;
}
.coords {
    width: 89px;
    flex: none;
    padding-left: 10px;
    line-height: 19px;
}
.coords span:first-child {
    display: inline-block;
    width: 25px;
}
.st-z {
    width: 12px;
    flex: none;
    margin-left: 0;
}
.st-r {
    width: 12px;
    flex: none;
    margin-left: 11px;
}
.live {
    height: 37px;
    background-color: #fff;
    color: #333;
    margin-right: 0;
}
.live .spin-val {
    padding-left: 11px;
}
.st-rot .spin-val {
    padding-left: 13px;
}
.live i {
    width: 21px;
}
.live i::before {
    left: 4px;
    right: 3px;
    background-color: #333;
}
.live .plus::after {
    left: 9px;
    background-color: #333;
}
.st-zoom {
    width: 99px;
}
.st-rot {
    width: 107px;
}
```

FILE: script.js
```js
// palette colours, same order as the default inkscape swatches
var colours = [
    "000000", "1a1a1a", "333333", "4d4d4d", "666666", "808080", "999999", "b3b3b3", "cccccc", "e6e6e6", "ececec", "f2f2f2", "f9f9f9", "ffffff",
    "800000", "ff0000", "808000", "ffff00", "008000", "00ff00", "008080", "00ffff", "000080", "0000ff", "800080", "ff00ff",
    "2b0000", "550000", "800000", "aa0000", "d40000", "ff0000", "ff2a2a", "ff5555", "ff8080", "ffaaaa", "ffd5d5",
    "280b0b", "501616", "782121", "a02c2c", "c83737", "d35f5f", "de8787", "e9afaf", "f4d7d7",
    "241c1c", "483737", "6c5353", "916f6f", "ac9393", "c8b7b7", "e3dbdb",
    "2b1100", "552200", "803300", "aa4400", "d45500", "ff6600", "ff7f2a", "ff9955", "ffb380", "ffccaa", "ffe6d5",
    "28170b", "502d16", "784421", "a05a2c", "c87137", "d38d5f", "deaa87", "e9c6af", "f4e3d7",
    "241f1c", "483e37", "6c5d53", "917c6f", "ac9d93"
];
var box = document.getElementById("swatches");
colours.forEach(function (c) {
    var el = document.createElement("i");
    el.style.backgroundColor = "#" + c;
    box.appendChild(el);
});
```
